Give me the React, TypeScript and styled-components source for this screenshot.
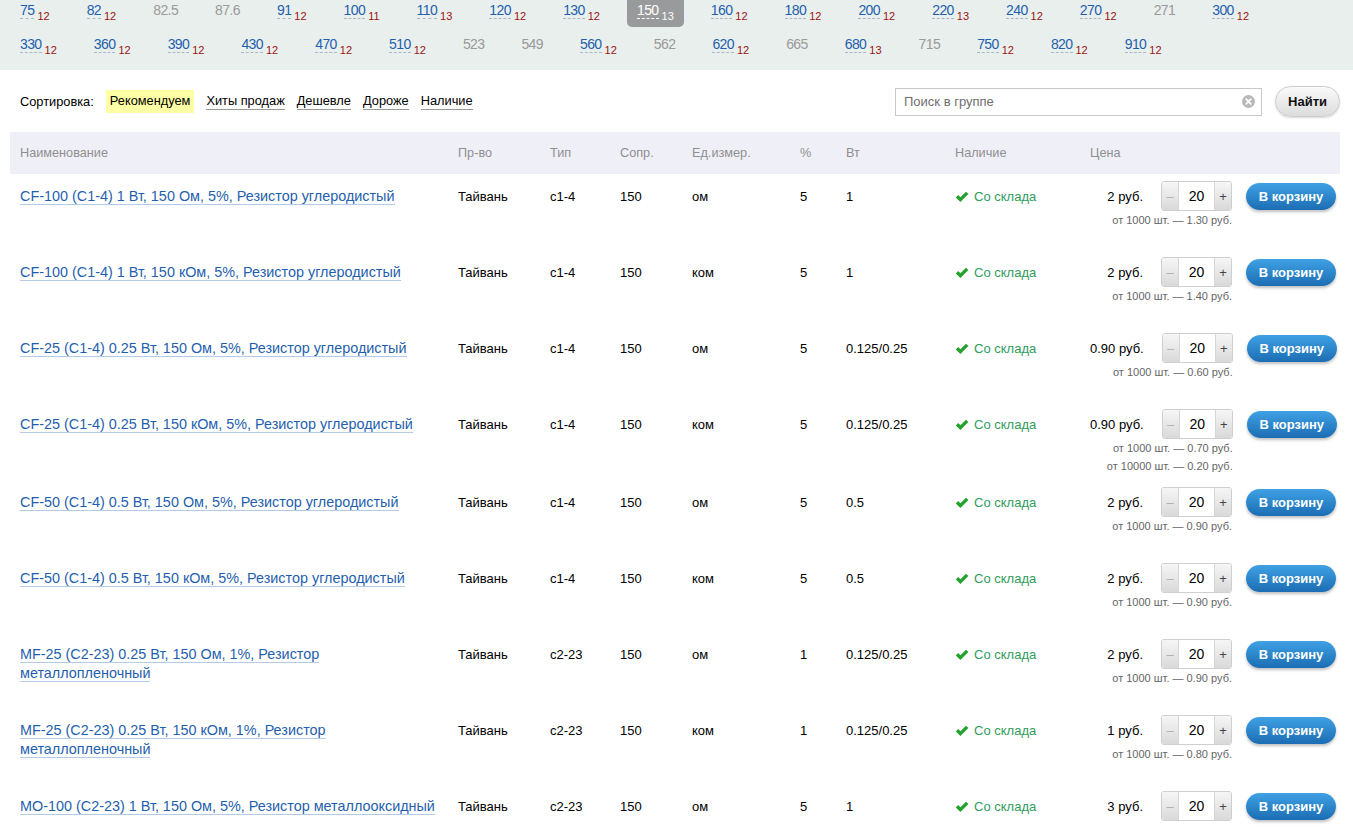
import React from "react"
import styled, { createGlobalStyle, css } from "styled-components"

const GlobalStyle = createGlobalStyle`
    html, body {
        margin: 0;
        padding: 0;
        background: #fff;
        font-family: "Liberation Sans", Arial, sans-serif;
        font-size: 13px;
        color: #000;
    }
`

type FilterItem = { value: string; count?: number; active?: boolean }

const filterRows: FilterItem[][] = [
    [
        { value: "75", count: 12 }, { value: "82", count: 12 }, { value: "82.5" }, { value: "87.6" },
        { value: "91", count: 12 }, { value: "100", count: 11 }, { value: "110", count: 13 },
        { value: "120", count: 12 }, { value: "130", count: 12 }, { value: "150", count: 13, active: true },
        { value: "160", count: 12 }, { value: "180", count: 12 }, { value: "200", count: 12 },
        { value: "220", count: 13 }, { value: "240", count: 12 }, { value: "270", count: 12 },
        { value: "271" }, { value: "300", count: 12 },
    ],
    [
        { value: "330", count: 12 }, { value: "360", count: 12 }, { value: "390", count: 12 },
        { value: "430", count: 12 }, { value: "470", count: 12 }, { value: "510", count: 12 },
        { value: "523" }, { value: "549" }, { value: "560", count: 12 }, { value: "562" },
        { value: "620", count: 12 }, { value: "665" }, { value: "680", count: 13 }, { value: "715" },
        { value: "750", count: 12 }, { value: "820", count: 12 }, { value: "910", count: 12 },
    ],
]

type Product = {
    name: string
    type: string
    unit: string
    percent: string
    watt: string
    price: string
    tiers: string[]
}

const products: Product[] = [
    { name: "CF-100 (C1-4) 1 Вт, 150 Ом, 5%, Резистор углеродистый", type: "c1-4", unit: "ом", percent: "5", watt: "1", price: "2 руб.", tiers: ["от 1000 шт. — 1.30 руб."] },
    { name: "CF-100 (C1-4) 1 Вт, 150 кОм, 5%, Резистор углеродистый", type: "c1-4", unit: "ком", percent: "5", watt: "1", price: "2 руб.", tiers: ["от 1000 шт. — 1.40 руб."] },
    { name: "CF-25 (C1-4) 0.25 Вт, 150 Ом, 5%, Резистор углеродистый", type: "c1-4", unit: "ом", percent: "5", watt: "0.125/0.25", price: "0.90 руб.", tiers: ["от 1000 шт. — 0.60 руб."] },
    { name: "CF-25 (C1-4) 0.25 Вт, 150 кОм, 5%, Резистор углеродистый", type: "c1-4", unit: "ком", percent: "5", watt: "0.125/0.25", price: "0.90 руб.", tiers: ["от 1000 шт. — 0.70 руб.", "от 10000 шт. — 0.20 руб."] },
    { name: "CF-50 (C1-4) 0.5 Вт, 150 Ом, 5%, Резистор углеродистый", type: "c1-4", unit: "ом", percent: "5", watt: "0.5", price: "2 руб.", tiers: ["от 1000 шт. — 0.90 руб."] },
    { name: "CF-50 (C1-4) 0.5 Вт, 150 кОм, 5%, Резистор углеродистый", type: "c1-4", unit: "ком", percent: "5", watt: "0.5", price: "2 руб.", tiers: ["от 1000 шт. — 0.90 руб."] },
    { name: "MF-25 (C2-23) 0.25 Вт, 150 Ом, 1%, Резистор металлопленочный", type: "c2-23", unit: "ом", percent: "1", watt: "0.125/0.25", price: "2 руб.", tiers: ["от 1000 шт. — 0.90 руб."] },
    { name: "MF-25 (C2-23) 0.25 Вт, 150 кОм, 1%, Резистор металлопленочный", type: "c2-23", unit: "ком", percent: "1", watt: "0.125/0.25", price: "1 руб.", tiers: ["от 1000 шт. — 0.80 руб."] },
    { name: "MO-100 (C2-23) 1 Вт, 150 Ом, 5%, Резистор металлооксидный", type: "c2-23", unit: "ом", percent: "5", watt: "1", price: "3 руб.", tiers: [] },
]

const sortOptions = ["Рекомендуем", "Хиты продаж", "Дешевле", "Дороже", "Наличие"]

const CheckIcon = () => (
    <svg width="14" height="12" viewBox="0 0 14 12">
        <path d="M0.8 6.4 L3.2 4.1 L5.4 6.3 L11 0.7 L13.4 3 L5.4 11 Z" fill="#26a12e" />
    </svg>
)

const ClearIcon = () => (
    <svg width="13" height="13" viewBox="0 0 13 13">
        <circle cx="6.5" cy="6.5" r="6.5" fill="#b9b9b9" />
        <path d="M4.2 4.2 L8.8 8.8 M8.8 4.2 L4.2 8.8" stroke="#fff" strokeWidth="1.8" strokeLinecap="round" />
    </svg>
)

export default function App() {
    return (
        <Page>
            <GlobalStyle />
            <FilterPanel>
                {filterRows.map((row, i) => (
                    <FilterRow key={i}>
                        {row.map((item) => (
                            <FilterValue key={item.value} $active={item.active}>
                                <FilterNumber $link={item.count !== undefined} $active={item.active}>{item.value}</FilterNumber>
                                {item.count !== undefined && <FilterCount $active={item.active}>{item.count}</FilterCount>}
                            </FilterValue>
                        ))}
                    </FilterRow>
                ))}
            </FilterPanel>

            <SortBar>
                <SortLabel>Сортировка:</SortLabel>
                {sortOptions.map((option, i) => (
                    <SortOption key={option} $selected={i === 0}>{option}</SortOption>
                ))}
                <SearchGroup>
                    <SearchBox>
                        <SearchInput placeholder="Поиск в группе" />
                        <ClearButton><ClearIcon /></ClearButton>
                    </SearchBox>
                    <FindButton>Найти</FindButton>
                </SearchGroup>
            </SortBar>

            <Table>
                <HeaderRow>
                    <HeaderCell>Наименование</HeaderCell>
                    <HeaderCell>Пр-во</HeaderCell>
                    <HeaderCell>Тип</HeaderCell>
                    <HeaderCell>Сопр.</HeaderCell>
                    <HeaderCell>Ед.измер.</HeaderCell>
                    <HeaderCell>%</HeaderCell>
                    <HeaderCell>Вт</HeaderCell>
                    <HeaderCell>Наличие</HeaderCell>
                    <HeaderCell>Цена</HeaderCell>
                </HeaderRow>
                {products.map((product) => (
                    <ProductRow key={product.name}>
                        <NameCell><ProductLink href="#">{product.name}</ProductLink></NameCell>
                        <Cell>Тайвань</Cell>
                        <Cell>{product.type}</Cell>
                        <Cell>150</Cell>
                        <Cell>{product.unit}</Cell>
                        <Cell>{product.percent}</Cell>
                        <Cell>{product.watt}</Cell>
                        <StockCell><CheckIcon /><span>Со склада</span></StockCell>
                        <PriceCell>
                            <PriceBlock>
                                <PriceLine>
                                    <PriceValue>{product.price}</PriceValue>
                                    <Quantity>
                                        <QuantityStep $kind="minus">–</QuantityStep>
                                        <QuantityValue>20</QuantityValue>
                                        <QuantityStep $kind="plus">+</QuantityStep>
                                    </Quantity>
                                </PriceLine>
                                {product.tiers.map((tier) => (
                                    <PriceTier key={tier}>{tier}</PriceTier>
                                ))}
                            </PriceBlock>
                            <CartButton>В корзину</CartButton>
                        </PriceCell>
                    </ProductRow>
                ))}
            </Table>
        </Page>
    )
}

const Page = styled.div`
    width: 100%;
    min-height: 828px;
`

const FilterPanel = styled.div`
    background: #e9efed;
    height: 70px;
    padding-left: 10px;
    box-sizing: border-box;
    display: flex;
    flex-direction: column;
    gap: 7px;
`

const FilterRow = styled.div`
    display: flex;
    align-items: flex-start;
    gap: 17px;
`

const FilterValue = styled.div<{ $active?: boolean }>`
    display: flex;
    align-items: baseline;
    height: 27px;
    box-sizing: border-box;
    padding: 2px 10px 0;
    border-radius: 0 0 5px 5px;
    background: ${({ $active }) => ($active ? "#999a9c" : "transparent")};
`

const FilterNumber = styled.span<{ $link: boolean; $active?: boolean }>`
    font-size: 14px;
    line-height: 16px;
    letter-spacing: -0.6px;
    color: ${({ $link, $active }) => ($active ? "#fff" : $link ? "#1f5fae" : "#9a9a9a")};
    ${({ $link, $active }) =>
        $link &&
        css`
            border-bottom: 1px dashed ${$active ? "#fff" : "#a9b8c8"};
        `}
`

const FilterCount = styled.span<{ $active?: boolean }>`
    font-size: 11px;
    margin-left: 3px;
    position: relative;
    top: 5px;
    color: ${({ $active }) => ($active ? "#fff" : "#9b1313")};
`

const SortBar = styled.div`
    display: flex;
    align-items: center;
    height: 31px;
    margin-top: 16px;
    padding: 0 13px 0 20px;
    font-size: 12.8px;
`

const SortLabel = styled.span`
    margin-right: 12px;
`

const SortOption = styled.span<{ $selected?: boolean }>`
    margin-right: 12px;
    line-height: 16px;
    ${({ $selected }) =>
        $selected
            ? css`
                  background: #ffffa6;
                  padding: 3px 4px 4px;
              `
            : css`
                  border-bottom: 1px solid #999;
              `}
`

const SearchGroup = styled.div`
    margin-left: auto;
    display: flex;
    align-items: center;
    gap: 13px;
`

const SearchBox = styled.div`
    width: 367px;
    height: 28px;
    box-sizing: border-box;
    border: 1px solid #c8c8c8;
    display: flex;
    align-items: center;
`

const SearchInput = styled.input`
    flex: 1;
    border: none;
    outline: none;
    padding: 0 8px;
    font-family: "Liberation Sans", Arial, sans-serif;
    font-size: 13px;
    background: transparent;
    &::placeholder {
        color: #6f6f6f;
    }
`

const ClearButton = styled.span`
    display: flex;
    margin-right: 6px;
`

const FindButton = styled.button`
    width: 65px;
    height: 31px;
    border: 1px solid #cdcdcd;
    border-radius: 16px;
    background: linear-gradient(#fafafa, #dcdcdc);
    box-shadow: 0 1px 2px rgba(0, 0, 0, 0.15);
    font-family: "Liberation Sans", Arial, sans-serif;
    font-size: 13px;
    font-weight: bold;
    color: #111;
`

const Table = styled.div`
    margin: 15px 13px 0 10px;
`

const columns = "438px 92px 70px 72px 108px 46px 109px 135px 1fr"

const HeaderRow = styled.div`
    display: grid;
    grid-template-columns: ${columns};
    align-items: center;
    height: 42px;
    padding-left: 10px;
    background: #efeff8;
    color: #8f8f8f;
    font-size: 12.7px;
`

const HeaderCell = styled.div``

const ProductRow = styled.div`
    display: grid;
    grid-template-columns: ${columns};
    align-items: start;
    min-height: 76px;
    box-sizing: border-box;
    padding: 7px 0 5px 10px;
`

const Cell = styled.div`
    padding-top: 7px;
    line-height: 18px;
`

const NameCell = styled.div`
    padding: 6px 12px 0 0;
    line-height: 19px;
    font-size: 14.4px;
`

const ProductLink = styled.a`
    color: #1f5fae;
    text-decoration: none;
    border-bottom: 1px solid #b3cbe6;
`

const StockCell = styled.div`
    padding-top: 7px;
    line-height: 18px;
    display: flex;
    align-items: center;
    gap: 5px;
    color: #2f9d5b;
`

const PriceCell = styled.div`
    display: flex;
    align-items: flex-start;
    justify-content: flex-end;
    padding-right: 4px;
`

const PriceBlock = styled.div`
    display: flex;
    flex-direction: column;
    align-items: flex-end;
`

const PriceLine = styled.div`
    display: flex;
    align-items: center;
`

const PriceValue = styled.span`
    white-space: nowrap;
    margin-right: 18px;
`

const Quantity = styled.div`
    display: flex;
    width: 71px;
    height: 30px;
    box-sizing: border-box;
    border: 1px solid #cfcfcf;
    border-radius: 3px;
    overflow: hidden;
`

const QuantityStep = styled.span<{ $kind: "minus" | "plus" }>`
    width: 16px;
    display: flex;
    align-items: center;
    justify-content: center;
    font-size: 13px;
    background: linear-gradient(#f6f6f6, #d9d9d9);
    color: ${({ $kind }) => ($kind === "minus" ? "#b0b0b0" : "#444")};
    ${({ $kind }) => ($kind === "minus" ? "border-right" : "border-left")}: 1px solid #d6d6d6;
`

const QuantityValue = styled.span`
    flex: 1;
    display: flex;
    align-items: center;
    justify-content: center;
    background: #fff;
    font-size: 14px;
`

const PriceTier = styled.div`
    font-size: 11px;
    line-height: 18px;
    color: #666;
    white-space: nowrap;
`

const CartButton = styled.button`
    margin: 2px 0 0 14px;
    width: 90px;
    height: 27px;
    border: none;
    border-radius: 14px;
    background: linear-gradient(#3fa1e4, #1c6db3);
    box-shadow: 0 2px 3px rgba(0, 0, 0, 0.25);
    color: #fff;
    font-family: "Liberation Sans", Arial, sans-serif;
    font-size: 13px;
    font-weight: bold;
`
